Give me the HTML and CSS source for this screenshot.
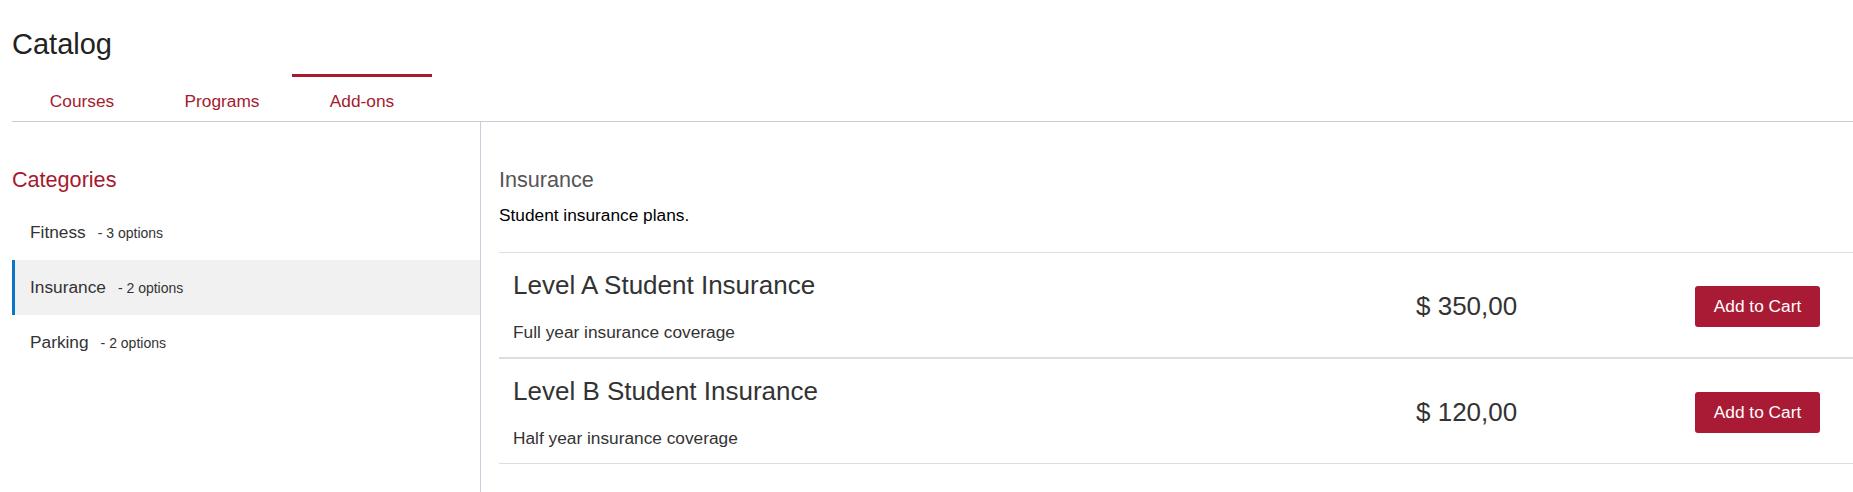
FILE: index.html
```html
<!DOCTYPE html>
<html lang="en">
<head>
<meta charset="utf-8">
<title>Catalog</title>
<link rel="stylesheet" href="styles.css">
</head>
<body>
<div class="page">
  <h1 class="page-title">Catalog</h1>
  <nav class="tabs">
    <a class="tab">Courses</a>
    <a class="tab">Programs</a>
    <a class="tab tab-active">Add-ons</a>
  </nav>
  <div class="main">
    <aside class="sidebar">
      <h2 class="side-title">Categories</h2>
      <ul class="cat-list">
        <li class="cat"><span class="cat-name">Fitness</span><span class="cat-count">- 3 options</span></li>
        <li class="cat cat-active"><span class="cat-name">Insurance</span><span class="cat-count">- 2 options</span></li>
        <li class="cat"><span class="cat-name">Parking</span><span class="cat-count">- 2 options</span></li>
      </ul>
    </aside>
    <section class="content">
      <h2 class="content-title">Insurance</h2>
      <p class="content-desc">Student insurance plans.</p>
      <div class="product">
        <div class="product-info">
          <div class="product-name">Level A Student Insurance</div>
          <div class="product-desc">Full year insurance coverage</div>
        </div>
        <div class="product-price">$ 350,00</div>
        <button class="btn-cart">Add to Cart</button>
      </div>
      <div class="product">
        <div class="product-info">
          <div class="product-name">Level B Student Insurance</div>
          <div class="product-desc">Half year insurance coverage</div>
        </div>
        <div class="product-price">$ 120,00</div>
        <button class="btn-cart">Add to Cart</button>
      </div>
    </section>
  </div>
</div>
</body>
</html>
```
FILE: styles.css
```css
* { box-sizing: border-box; }

html, body {
  margin: 0;
  padding: 0;
  background: #fff;
}

body {
  font-family: "Liberation Sans", Arial, sans-serif;
  font-size: 17.3px;
  color: #333;
  overflow: hidden;
}

.page {
  padding-left: 12px;
  min-height: 100vh;
  display: flex;
  flex-direction: column;
}

.page-title {
  margin: 27px 0 0;
  font-size: 29px;
  line-height: 34px;
  font-weight: normal;
  color: #222;
}

.tabs {
  display: flex;
  margin-top: 13px;
  border-bottom: 1px solid #c5ced8;
}

.tab {
  width: 140px;
  text-align: center;
  color: #a6192e;
  font-size: 17.3px;
  line-height: 20px;
  padding: 14px 0 10px;
  border-top: 3px solid transparent;
  cursor: pointer;
}

.tab-active {
  border-top-color: #a6192e;
}

.main {
  flex: 1;
  display: grid;
  grid-template-columns: 469px 1fr;
}

.sidebar {
  border-right: 1px solid #c5d0dc;
  padding-top: 45px;
}

.side-title {
  margin: 0 0 12px;
  font-size: 21.6px;
  line-height: 26px;
  font-weight: normal;
  color: #a6192e;
}

.cat-list {
  list-style: none;
  margin: 0;
  padding: 0;
}

.cat {
  height: 55px;
  line-height: 55px;
  padding-left: 15px;
  border-left: 3px solid transparent;
  color: #333;
  white-space: nowrap;
}

.cat-active {
  background: #f1f1f1;
  border-left-color: #0b76c5;
}

.cat-name {
  font-size: 17.3px;
}

.cat-count {
  font-size: 14px;
  line-height: 1;
  margin-left: 12px;
  color: #333;
}

.content {
  padding-top: 45px;
  padding-left: 18px;
}

.content-title {
  margin: 0 0 12px;
  font-size: 21.6px;
  line-height: 26px;
  font-weight: normal;
  color: #555;
}

.content-desc {
  margin: 0 0 27px;
  font-size: 17.3px;
  line-height: 20px;
  color: #000;
}

.product {
  display: grid;
  grid-template-columns: 1fr 279px 125px;
  align-items: center;
  padding: 17px 33px 15px 14px;
  border-top: 1px solid #dedede;
  border-bottom: 1px solid #dedede;
}

.product-name {
  font-size: 26px;
  line-height: 30px;
  color: #333;
}

.product-desc {
  margin-top: 22px;
  font-size: 17.3px;
  line-height: 20px;
  color: #333;
}

.product-price {
  font-size: 26px;
  line-height: 30px;
  color: #333;
}

.btn-cart {
  width: 125px;
  height: 41px;
  padding: 0;
  border: none;
  border-radius: 3px;
  background: #a91b34;
  color: #fff;
  font-family: "Liberation Sans", Arial, sans-serif;
  font-size: 17.3px;
  line-height: 41px;
  text-align: center;
  cursor: pointer;
}
```
